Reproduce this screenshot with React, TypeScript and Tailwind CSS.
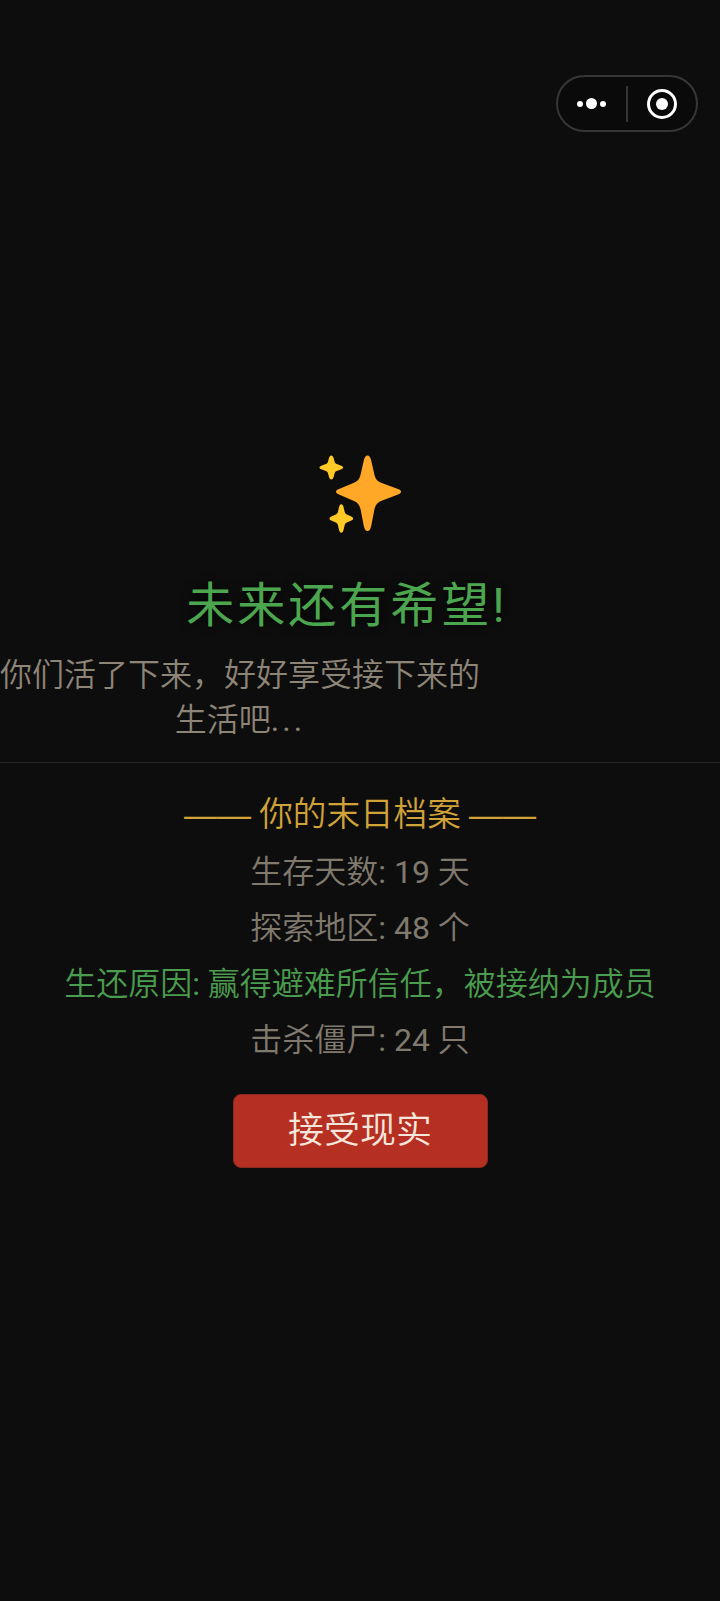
const STAR = "M48.5 1.5C50.5 1.5 51.500 3.500 52.200 6.500L55.500 21C56.500 25 58.500 27.500 62 28.800L79 35C81 35.800 82 36.600 82 37.800C82 39 81 39.800 79 40.600L62 47C58.500 48.300 56.500 51 55.500 55L52.200 72C51.500 75 50.500 77 48.500 77C46.500 77 45.500 75 44.800 72L41.500 55C40.500 51 38.500 48.300 35 47L20 40.600C18 39.800 17 39 17 37.800C17 36.600 18 35.800 20 35L35 28.800C38.500 27.500 40.500 25 41.500 21L44.800 6.500C45.500 3.500 46.500 1.500 48.500 1.500Z";
const SMALL_STAR = "M0 -12C1.200 -12 1.800 -11 2.300 -9.500L3.400 -5.500C3.800 -4.400 4.400 -3.800 5.500 -3.400L10 -1.800C11.200 -1.300 11.800 -0.800 11.800 0C11.800 0.800 11.200 1.300 10 1.800L5.500 3.400C4.400 3.800 3.800 4.400 3.400 5.500L2.300 9.500C1.800 11 1.200 12 0 12C-1.200 12 -1.800 11 -2.300 9.500L-3.400 5.500C-3.800 4.400 -4.400 3.800 -5.500 3.400L-10 1.800C-11.200 1.300 -11.800 0.800 -11.800 0C-11.800 -0.800 -11.200 -1.300 -10 -1.800L-5.500 -3.400C-4.400 -3.800 -3.800 -4.400 -3.400 -5.500L-2.300 -9.500C-1.800 -11 -1.200 -12 0 -12Z";

function Sparkles() {
  return (
    <svg className="h-[90px] w-[90px]" viewBox="0 0 90 90">
      <path d={STAR} fill="#ffa726" />
      <path d={SMALL_STAR} fill="#ffca28" transform="translate(12.300 13.500)" />
      <path d={SMALL_STAR} fill="#ffca28" transform="translate(22.300 64.500) scale(1 1.180)" />
    </svg>
  );
}

function Capsule() {
  return (
    <div className="absolute left-[556px] top-[75px] flex h-[57px] w-[142px] items-center rounded-full border-2 border-[#363636] bg-[#0a0a0a]">
      <div className="flex w-[68px] items-center justify-center gap-[3px] pr-[2px]">
        <span className="h-[6px] w-[6px] rounded-full bg-white" />
        <span className="h-[11px] w-[11px] rounded-full bg-white" />
        <span className="h-[6px] w-[6px] rounded-full bg-white" />
      </div>
      <div className="h-[36px] w-[1.5px] bg-[#363636]" />
      <div className="flex flex-1 items-center justify-center">
        <div className="flex h-[30px] w-[30px] items-center justify-center rounded-full border-[3px] border-white">
          <span className="h-3 w-3 rounded-full bg-white" />
        </div>
      </div>
    </div>
  );
}

function Stat({ label, value, unit }: { label: string; value: number; unit: string }) {
  return (
    <li>
      {label}
      <span className="font-normal">: {value} </span>
      {unit}
    </li>
  );
}

export default function App() {
  return (
    <div className="relative h-[1601px] w-[720px] overflow-hidden bg-[#0d0d0d] pt-[454px] font-['Roboto','Noto_Sans_CJK_SC',sans-serif] font-[350]">
      <Capsule />

      <div className="ml-[319px] w-[90px]">
        <Sparkles />
      </div>

      <h1 className="mt-[26px] w-[694px] text-center text-[48px] font-normal leading-[72px] tracking-[3px] text-[#4ca64f] [text-shadow:0_0_8px_#000]">
        未来还有希望!
      </h1>

      <p className="mt-[11px] w-[480px] text-center text-[32px] leading-[45px] text-[#8d8578]">
        <span className="block">你们活了下来，好好享受接下来的</span>
        <span className="block">
          生活吧<span className="font-normal tracking-[3px]">...</span>
        </span>
      </p>

      <div className="mt-[19px] border-t border-[#252525] pt-[28px] text-center">
        <div className="text-[33.6px] leading-[48px] text-[#d0a238]">
          <span className="font-['Liberation_Sans',sans-serif]">——</span> 你的末日档案{" "}
          <span className="font-['Liberation_Sans',sans-serif]">——</span>
        </div>
        <ul className="mt-[5px] text-[32px] leading-[56px] text-[#807a6e]">
          <Stat label="生存天数" value={19} unit="天" />
          <Stat label="探索地区" value={48} unit="个" />
          <li className="text-[#4a9c4e]">
            生还原因<span className="font-normal">: </span>赢得避难所信任，被接纳为成员
          </li>
          <Stat label="击杀僵尸" value={24} unit="只" />
        </ul>
        <button className="mt-[26px] h-[74px] w-[255px] rounded-[8px] border border-[#8b2a20] bg-[#b52f22] text-[36px] text-[#f5e6dc]">
          接受现实
        </button>
      </div>
    </div>
  );
}
